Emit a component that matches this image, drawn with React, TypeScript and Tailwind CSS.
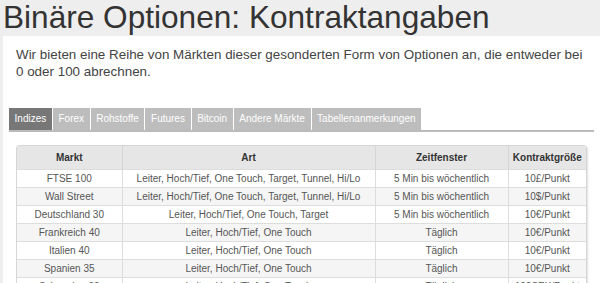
const tabs = ['Indizes', 'Forex', 'Rohstoffe', 'Futures', 'Bitcoin', 'Andere Märkte', 'Tabellenanmerkungen'];

const rows = [
  ['FTSE 100', 'Leiter, Hoch/Tief, One Touch, Target, Tunnel, Hi/Lo', '5 Min bis wöchentlich', '10£/Punkt'],
  ['Wall Street', 'Leiter, Hoch/Tief, One Touch, Target, Tunnel, Hi/Lo', '5 Min bis wöchentlich', '10$/Punkt'],
  ['Deutschland 30', 'Leiter, Hoch/Tief, One Touch, Target', '5 Min bis wöchentlich', '10€/Punkt'],
  ['Frankreich 40', 'Leiter, Hoch/Tief, One Touch', 'Täglich', '10€/Punkt'],
  ['Italien 40', 'Leiter, Hoch/Tief, One Touch', 'Täglich', '10€/Punkt'],
  ['Spanien 35', 'Leiter, Hoch/Tief, One Touch', 'Täglich', '10€/Punkt'],
  ['Schweden 30', 'Leiter, Hoch/Tief, One Touch', 'Täglich', '100SEK/Punkt'],
];

export default function App() {
  return (
    <div className="h-[283px] overflow-hidden bg-[#eeeeee] font-['Liberation_Sans',Arial,sans-serif]">
      <h1 className="h-[36px] pl-[3px] text-[31.6px] leading-[34px] text-[#333]">Binäre Optionen: Kontraktangaben</h1>
      <div className="ml-[3px] bg-white px-[6px] pt-[10px] pb-4">
        <p className="mx-[7px] text-[13.4px] leading-[17px] text-[#444]">
          Wir bieten eine Reihe von Märkten dieser gesonderten Form von Optionen an, die entweder bei 0 oder 100 abrechnen.
        </p>

        <div className="mt-[28px] flex border-b-2 border-[#bbbbbb]">
          {tabs.map((t, i) => (
            <div
              key={t}
              className={
                'mr-px h-[22px] px-[5.6px] text-[10px] leading-[22px] text-white ' +
                (i === 0 ? 'bg-[#777777]' : 'bg-[#bdbdbd]')
              }
            >
              {t}
            </div>
          ))}
        </div>

        <div className="mx-[7px] mt-[13px] overflow-hidden rounded-t-[3px] border border-[#d6d6d6] shadow-[1px_1px_2px_rgba(0,0,0,0.12)]">
          <table className="w-full border-collapse text-center text-[10px] text-[#555]">
            <thead>
              <tr className="h-[23px] bg-[#e6e6e6] text-[#333]">
                <th className="w-[105px] border-r border-[#d6d6d6] font-bold">Markt</th>
                <th className="w-[253px] border-r border-[#d6d6d6] font-bold">Art</th>
                <th className="w-[133px] border-r border-[#d6d6d6] font-bold">Zeitfenster</th>
                <th className="font-bold">Kontraktgröße</th>
              </tr>
            </thead>
            <tbody>
              {rows.map((r, i) => (
                <tr key={r[0]} className={'h-[18px] border-t border-[#dddddd] ' + (i % 2 ? 'bg-[#f5f5f5]' : 'bg-white')}>
                  {r.map((c, j) => (
                    <td key={j} className={'p-0 leading-[17px] ' + (j < 3 ? 'border-r border-[#dddddd]' : '')}>
                      {c}
                    </td>
                  ))}
                </tr>
              ))}
            </tbody>
          </table>
        </div>
      </div>
    </div>
  );
}
